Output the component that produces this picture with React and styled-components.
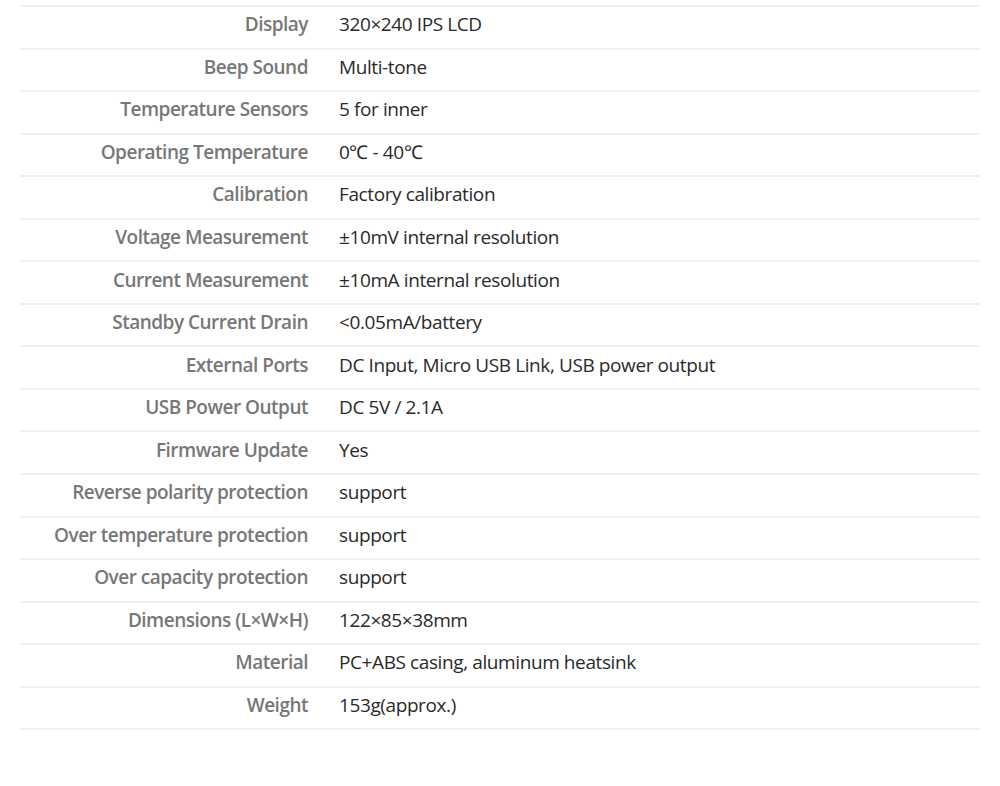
import React from 'react';
import styled, { createGlobalStyle } from 'styled-components';

const Global = createGlobalStyle`
  body {
    margin: 0;
    background: #fff;
    font-family: "Open Sans", "Liberation Sans", sans-serif;
  }
`;

const Page = styled.div`
  padding: 5px 20px 0;
`;

const Table = styled.div`
  display: flex;
  flex-direction: column;
  border-bottom: 2px solid #efefef;
`;

const Row = styled.div`
  display: grid;
  grid-template-columns: 288px 1fr;
  column-gap: 31px;
  align-items: center;
  height: 42.56px;
  box-sizing: border-box;
  padding-bottom: 6px;
  border-top: 2px solid #efefef;
`;

const Label = styled.div`
  text-align: right;
  font-size: 19px;
  font-weight: 600;
  color: #777;
  letter-spacing: -0.5px;
  white-space: nowrap;
`;

const Value = styled.div`
  font-size: 19px;
  color: #2a2a2a;
  letter-spacing: -0.4px;
  white-space: nowrap;
`;

const specs = [
  ['Display', '320×240 IPS LCD'],
  ['Beep Sound', 'Multi-tone'],
  ['Temperature Sensors', '5 for inner'],
  ['Operating Temperature', '0℃ - 40℃'],
  ['Calibration', 'Factory calibration'],
  ['Voltage Measurement', '±10mV internal resolution'],
  ['Current Measurement', '±10mA internal resolution'],
  ['Standby Current Drain', '<0.05mA/battery'],
  ['External Ports', 'DC Input, Micro USB Link, USB power output'],
  ['USB Power Output', 'DC 5V / 2.1A'],
  ['Firmware Update', 'Yes'],
  ['Reverse polarity protection', 'support'],
  ['Over temperature protection', 'support'],
  ['Over capacity protection', 'support'],
  ['Dimensions (L×W×H)', '122×85×38mm'],
  ['Material', 'PC+ABS casing, aluminum heatsink'],
  ['Weight', '153g(approx.)'],
];

export default function App() {
  return (
    <>
      <Global />
      <Page>
        <Table>
          {specs.map(([k, v]) => (
            <Row key={k}>
              <Label>{k}</Label>
              <Value>{v}</Value>
            </Row>
          ))}
        </Table>
      </Page>
    </>
  );
}
